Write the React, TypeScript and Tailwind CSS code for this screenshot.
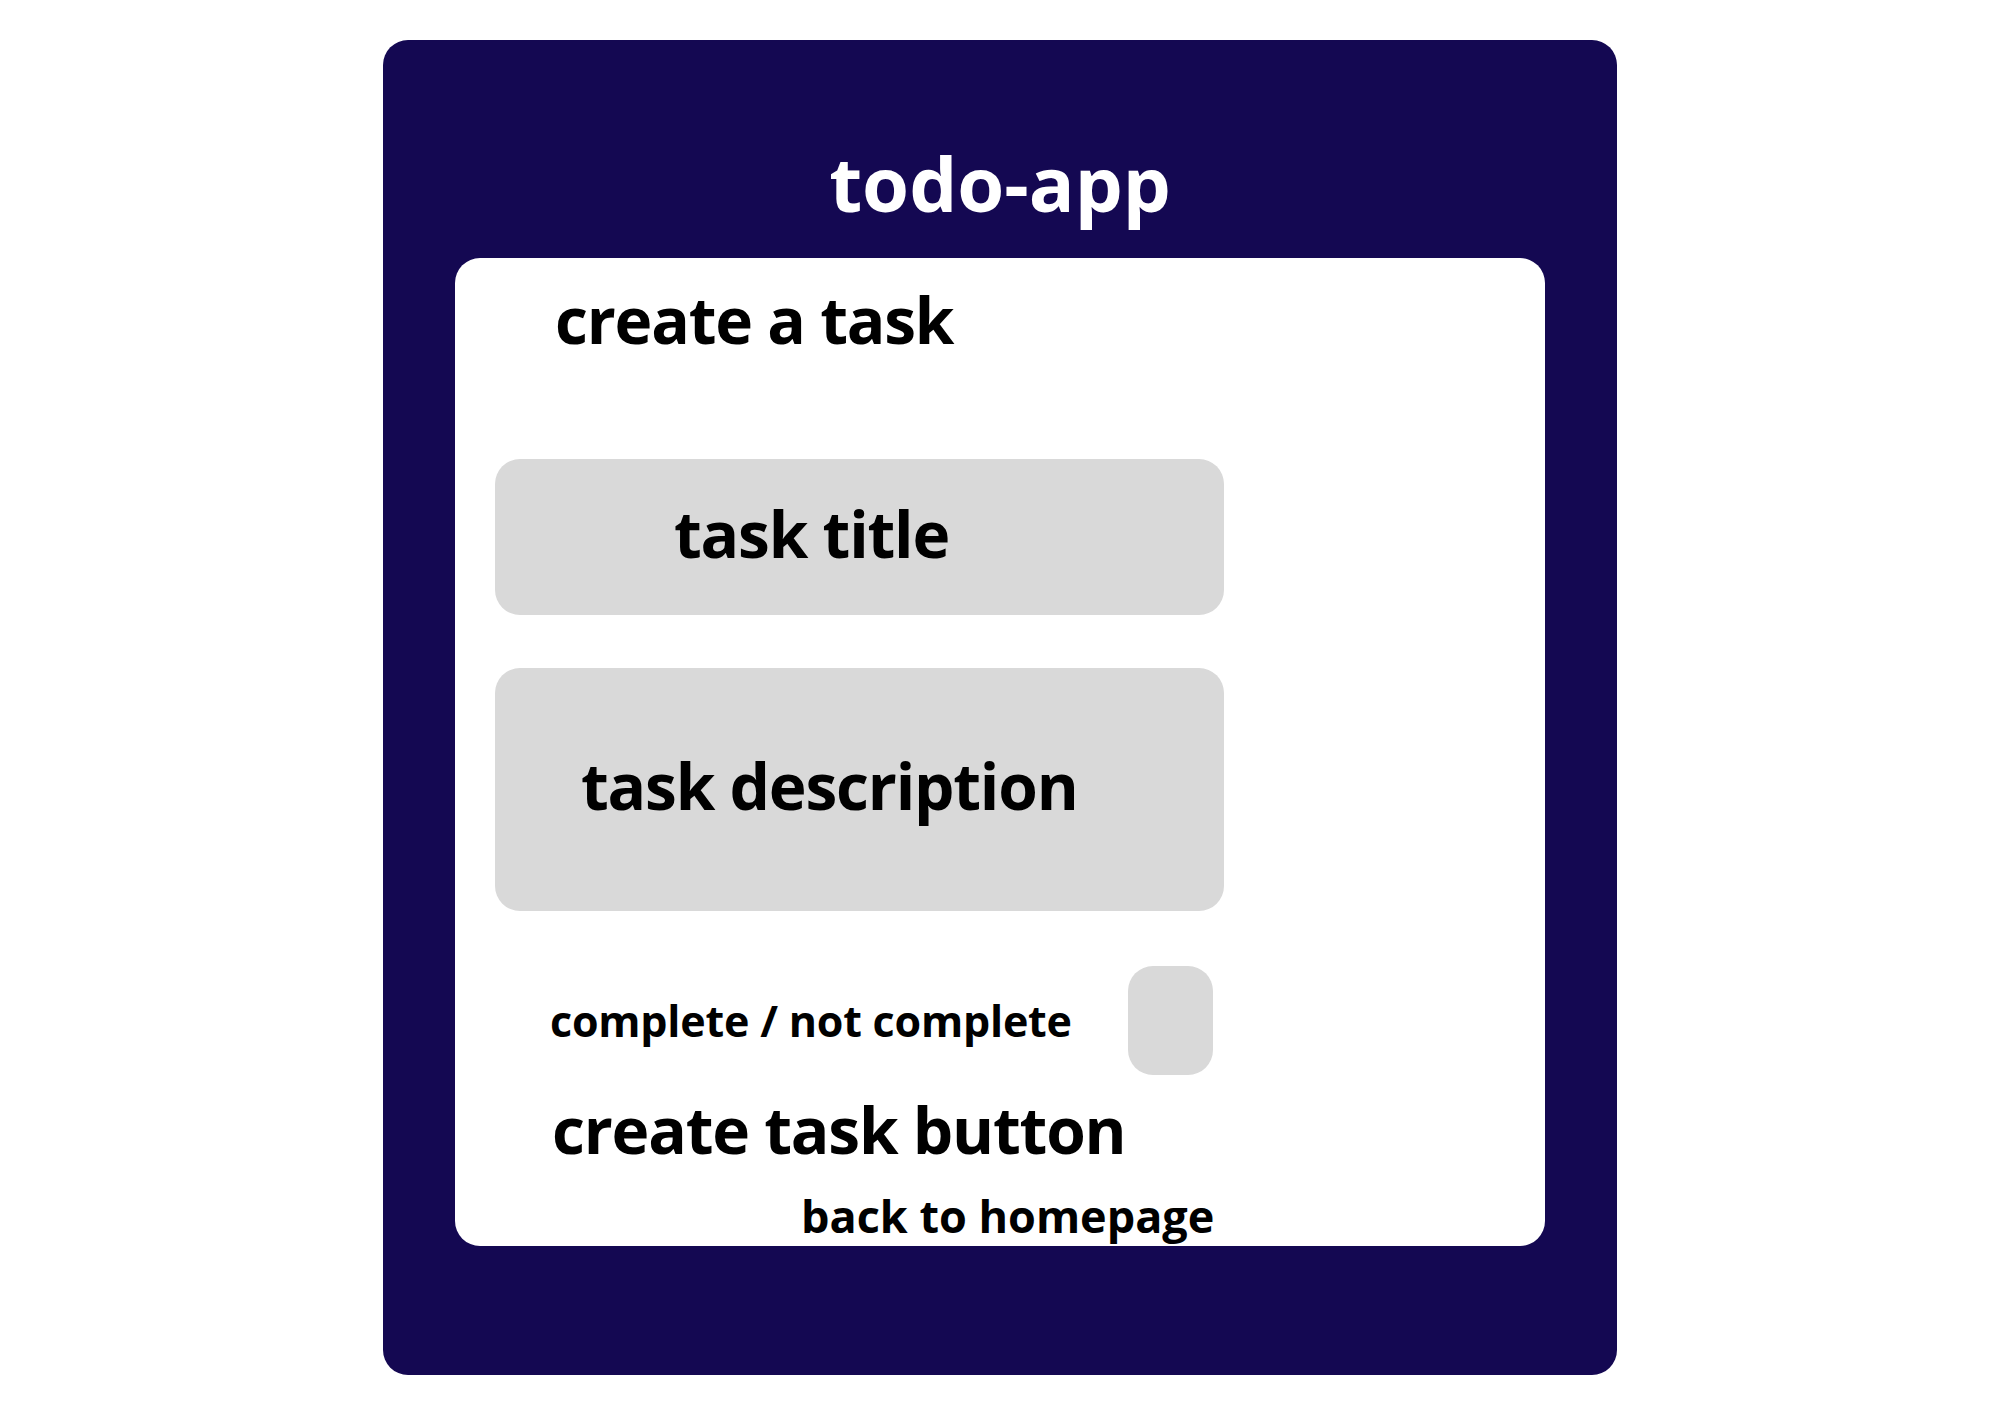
import React from "react";

export default function App() {
  const font = { fontFamily: '"Open Sans", "Noto Sans", sans-serif' };
  return (
    <div className="w-[2000px] h-[1414px] bg-white pt-[40px]" style={font}>
      <div className="mx-auto w-[1234px] h-[1335px] bg-[#140852] rounded-[25px] flex flex-col items-center pt-[105px]">
        <h1 className="text-white font-bold text-[76px] leading-[76px] h-[76px] text-center">todo-app</h1>
        <div className="mt-[37px] w-[1090px] h-[988px] bg-white rounded-[25px] flex flex-col pl-[40px] pt-[30px]">
          <h2 className="ml-[60px] text-black font-bold text-[64px] leading-[64px] h-[64px] tracking-[-1.2px]">create a task</h2>
          <div className="mt-[107px] w-[729px] h-[156px] bg-[#d9d9d9] rounded-[25px] flex items-center pl-[179px] pb-[6px]">
            <span className="text-black font-bold text-[64px] leading-[64px] tracking-[-1.2px]">task title</span>
          </div>
          <div className="mt-[53px] w-[729px] h-[243px] bg-[#d9d9d9] rounded-[25px] flex items-center pl-[86px] pb-[8px]">
            <span className="text-black font-bold text-[64px] leading-[64px] tracking-[-1.2px]">task description</span>
          </div>
          <div className="mt-[55px] flex items-center">
            <span className="ml-[55px] text-black font-bold text-[43px] leading-[44px] w-[578px] tracking-[-0.2px]">complete / not complete</span>
            <div className="w-[85px] h-[109px] bg-[#d9d9d9] rounded-[25px]" />
          </div>
          <div className="mt-[23px] ml-[57px] text-black font-bold text-[64px] leading-[64px] h-[64px] tracking-[-1.2px]">create task button</div>
          <div className="mt-[31px] ml-[306px] text-black font-bold text-[45px] leading-[45px] h-[45px]">back to homepage</div>
        </div>
      </div>
    </div>
  );
}
